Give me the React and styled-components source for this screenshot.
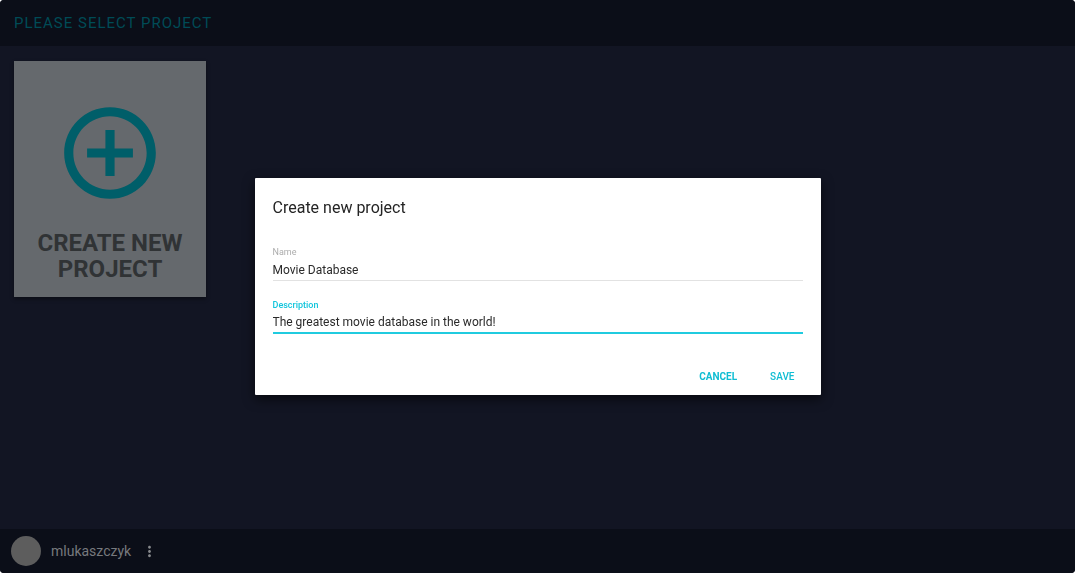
import React, { useState } from "react";
import styled, { createGlobalStyle } from "styled-components";

const GlobalStyle = createGlobalStyle`
  *, *::before, *::after { box-sizing: border-box; }
  body { margin: 0; background: #ffffff; font-family: Roboto, sans-serif; }
  button, input { font-family: inherit; }
`;

const Page = styled.div`
  display: flex;
  flex-direction: column;
  min-height: 100vh;
  overflow: hidden;
  border-radius: 4px;
  background: #121523;
`;

const Header = styled.header`
  display: flex;
  align-items: center;
  height: 46px;
  padding: 0 14px;
  background: #0b0e18;
`;

const PageTitle = styled.h1`
  margin: 0;
  color: #004b56;
  font-size: 15px;
  font-weight: 400;
  line-height: 20px;
  letter-spacing: 1px;
  text-transform: uppercase;
`;

const Projects = styled.main`
  display: flex;
  flex: 1;
  flex-wrap: wrap;
  align-content: flex-start;
  gap: 14px;
  padding: 15px 14px;
`;

const ProjectCard = styled.button`
  display: flex;
  flex-direction: column;
  align-items: center;
  gap: 22px;
  width: 192px;
  height: 236px;
  padding: 37px 14px 0;
  border: 0;
  background: #65696d;
  box-shadow: 0 2px 4px rgba(0, 0, 0, 0.4);
  color: #303335;
  cursor: pointer;
`;

const CardLabel = styled.span`
  font-size: 24px;
  font-weight: 700;
  line-height: 26px;
  text-align: center;
  text-transform: uppercase;
`;

const Footer = styled.footer`
  display: flex;
  align-items: center;
  height: 44px;
  padding: 0 11px;
  background: #0b0e18;
  color: #77797d;
`;

const Avatar = styled.span`
  width: 30px;
  height: 30px;
  border-radius: 50%;
  background: #5d5d5d;
`;

const UserName = styled.span`
  margin: 0 10px;
  font-size: 14px;
  line-height: 20px;
`;

const MenuButton = styled.button`
  display: flex;
  padding: 0;
  border: 0;
  background: none;
  color: #888a8d;
  cursor: pointer;
`;

const Overlay = styled.div`
  position: fixed;
  inset: 0;
  display: flex;
  align-items: center;
  justify-content: center;
  padding: 18px;
`;

const Dialog = styled.form`
  width: 100%;
  max-width: 566px;
  padding: 18px 18px 6px;
  border-radius: 1px;
  background: #ffffff;
  box-shadow: 0 4px 12px rgba(0, 0, 0, 0.6);
`;

const DialogTitle = styled.h2`
  margin: 0 0 26px;
  color: #242424;
  font-size: 16px;
  font-weight: 400;
  line-height: 24px;
`;

const Field = styled.div`
  display: flex;
  flex-direction: column;
  height: 35px;
  margin-bottom: 18px;
`;

const FieldLabel = styled.label`
  color: ${(p) => (p.$active ? "#12c5dc" : "#acacac")};
  font-size: 9px;
  font-weight: ${(p) => (p.$active ? 500 : 400)};
  line-height: 12px;
`;

const FieldInput = styled.input`
  flex: 1;
  width: 100%;
  min-height: 0;
  padding: ${(p) => (p.$active ? "0" : "2px 0 0")};
  border: 0;
  border-bottom: ${(p) => (p.$active ? "2px solid #20cbdf" : "1px solid #e2e2e2")};
  border-radius: 0;
  outline: 0;
  background: transparent;
  color: #2a2a2a;
  font-size: 12px;
  line-height: 16px;
`;

const Actions = styled.div`
  display: flex;
  justify-content: flex-end;
  gap: 9px;
  margin-top: 31px;
  margin-right: -4px;
`;

const ActionButton = styled.button`
  height: 24px;
  padding: 0 12px;
  border: 0;
  background: none;
  color: #10bdd3;
  font-size: 10px;
  font-weight: ${(p) => (p.$strong ? 700 : 500)};
  line-height: 24px;
  text-transform: uppercase;
  cursor: pointer;
`;

const AddIcon = () => (
  <svg width="110" height="110" viewBox="0 0 24 24" fill="#005e69" aria-hidden="true">
    <path d="M13 7h-2v4H7v2h4v4h2v-4h4v-2h-4V7zm-1-5C6.48 2 2 6.48 2 12s4.48 10 10 10 10-4.48 10-10S17.52 2 12 2zm0 18c-4.41 0-8-3.59-8-8s3.59-8 8-8 8 3.59 8 8-3.59 8-8 8z" />
  </svg>
);

const MoreIcon = () => (
  <svg width="17" height="17" viewBox="0 0 24 24" fill="currentColor" aria-hidden="true">
    <path d="M12 8c1.1 0 2-.9 2-2s-.9-2-2-2-2 .9-2 2 .9 2 2 2zm0 2c-1.1 0-2 .9-2 2s.9 2 2 2 2-.9 2-2-.9-2-2-2zm0 6c-1.1 0-2 .9-2 2s.9 2 2 2 2-.9 2-2-.9-2-2-2z" />
  </svg>
);

function TextField({ id, label, value, onChange, active }) {
  return (
    <Field>
      <FieldLabel htmlFor={id} $active={active}>{label}</FieldLabel>
      <FieldInput
        id={id}
        type="text"
        value={value}
        $active={active}
        onChange={(e) => onChange(e.target.value)}
      />
    </Field>
  );
}

export default function App() {
  const [name, setName] = useState("Movie Database");
  const [description, setDescription] = useState("The greatest movie database in the world!");

  return (
    <>
      <GlobalStyle />
      <Page>
        <Header>
          <PageTitle>Please select project</PageTitle>
        </Header>
        <Projects>
          <ProjectCard type="button">
            <AddIcon />
            <CardLabel>Create new project</CardLabel>
          </ProjectCard>
        </Projects>
        <Footer>
          <Avatar />
          <UserName>mlukaszczyk</UserName>
          <MenuButton type="button" aria-label="User menu">
            <MoreIcon />
          </MenuButton>
        </Footer>
      </Page>
      <Overlay>
        <Dialog
          role="dialog"
          aria-modal="true"
          aria-labelledby="dialog-title"
          onSubmit={(e) => e.preventDefault()}
        >
          <DialogTitle id="dialog-title">Create new project</DialogTitle>
          <TextField id="project-name" label="Name" value={name} onChange={setName} />
          <TextField
            id="project-description"
            label="Description"
            value={description}
            onChange={setDescription}
            active
          />
          <Actions>
            <ActionButton type="button" $strong>Cancel</ActionButton>
            <ActionButton type="submit">Save</ActionButton>
          </Actions>
        </Dialog>
      </Overlay>
    </>
  );
}
